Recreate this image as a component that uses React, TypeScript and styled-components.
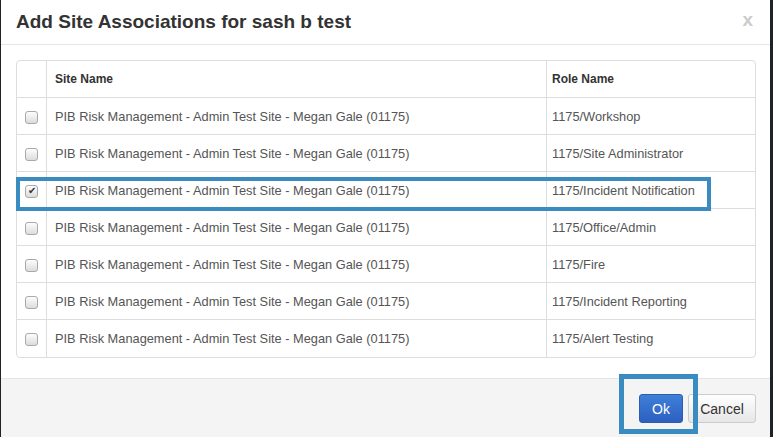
import React, { useState } from 'react'
import styled, { createGlobalStyle } from 'styled-components'

const GlobalStyle = createGlobalStyle`
    html, body {
        margin: 0;
        padding: 0;
        background: #1d2328;
        font-family: "Liberation Sans", Arial, sans-serif;
    }
`

const Page = styled.div`
    width: 773px;
    height: 437px;
    display: flex;
    padding-left: 1px;
    padding-right: 3px;
    box-sizing: border-box;
    overflow: hidden;
`

const Modal = styled.div`
    flex: 1;
    background: #ffffff;
    display: flex;
    flex-direction: column;
`

const Header = styled.div`
    height: 45px;
    box-sizing: border-box;
    border-bottom: 1px solid #e5e5e5;
    padding: 0 15px;
    display: flex;
    align-items: center;
    justify-content: space-between;
`

const Title = styled.h4`
    margin: 0;
    font-size: 19px;
    font-weight: bold;
    color: #333333;
`

const Close = styled.span`
    font-size: 19px;
    font-weight: bold;
    color: #cccccc;
    margin-right: 2px;
    margin-top: -4px;
`

const Body = styled.div`
    padding: 15px 14px 20px 15px;
`

const Table = styled.div`
    border: 1px solid #dddddd;
    border-radius: 4px;
    display: grid;
    grid-template-columns: 29px 500px 1fr;
`

type CellProps = {
    $last?: boolean,
    $first?: boolean,
    $head?: boolean,
    $role?: boolean,
}

const Cell = styled.div<CellProps>`
    height: 37px;
    box-sizing: border-box;
    display: flex;
    align-items: center;
    padding: 0 ${({ $role }) => $role ? '5px' : '8px'};
    font-size: ${({ $head }) => $head ? '12px' : '12.8px'};
    color: ${({ $head }) => $head ? '#333333' : '#555555'};
    font-weight: ${({ $head }) => $head ? 'bold' : 'normal'};
    border-left: ${({ $first }) => $first ? 'none' : '1px solid #dddddd'};
    border-bottom: ${({ $last }) => $last ? 'none' : '1px solid #dddddd'};
    white-space: nowrap;
`

const CheckCell = styled(Cell)`
    justify-content: center;
    padding: 0;
`

const Box = styled.span<{ $checked: boolean }>`
    width: 11px;
    height: 11px;
    border: 1px solid #a9a9a9;
    border-radius: 3px;
    background: linear-gradient(#fdfdfd, #dcdcdc);
    display: flex;
    align-items: center;
    justify-content: center;
    margin-top: 2px;
    cursor: pointer;
    color: #333333;
    font-size: 10px;
    line-height: 1;
`

const RowWrap = styled.div`
    display: contents;
`

const Highlight = styled.div`
    position: absolute;
    left: 16px;
    top: 177px;
    width: 695px;
    height: 34px;
    box-sizing: border-box;
    border: 4px solid #3a8bc0;
    pointer-events: none;
`

const OkHighlight = styled.div`
    position: absolute;
    left: 619px;
    top: 374px;
    width: 79px;
    height: 60px;
    box-sizing: border-box;
    border: 5px solid #3a8bc0;
    pointer-events: none;
`

const Footer = styled.div`
    flex: 1;
    background: #f4f4f4;
    border-top: 1px solid #e5e5e5;
    display: flex;
    justify-content: flex-end;
    align-items: flex-start;
    padding: 15px 14px 0 0;
    gap: 5px;
`

type BtnProps = {
    $primary?: boolean,
}

const Button = styled.button<BtnProps>`
    height: 29px;
    padding: 0;
    font-family: "Liberation Sans", Arial, sans-serif;
    font-size: 14px;
    border-radius: 3px;
    cursor: pointer;
    color: ${({ $primary }) => $primary ? '#ffffff' : '#333333'};
    border: 1px solid ${({ $primary }) => $primary ? '#2a5db0' : '#cccccc'};
    background: ${({ $primary }) => $primary
        ? 'linear-gradient(#3e80d8, #2d5fc0)'
        : 'linear-gradient(#ffffff, #e6e6e6)'};
    width: ${({ $primary }) => $primary ? '44px' : '68px'};
`

const SITE = 'PIB Risk Management - Admin Test Site - Megan Gale (01175)'

const roles = [
    '1175/Workshop',
    '1175/Site Administrator',
    '1175/Incident Notification',
    '1175/Office/Admin',
    '1175/Fire',
    '1175/Incident Reporting',
    '1175/Alert Testing',
]

const App: React.FunctionComponent = () => {
    const [checked, setChecked] = useState<number[]>([2])

    const toggle = (i: number) => setChecked((prev) => prev.includes(i) ? prev.filter((x) => x !== i) : [...prev, i])

    return (
        <>
            <GlobalStyle />
            <Page>
                <Modal>
                    <Header>
                        <Title>Add Site Associations for sash b test</Title>
                        <Close>x</Close>
                    </Header>
                    <Body>
                        <Table>
                            <CheckCell $first $head />
                            <Cell $head>Site Name</Cell>
                            <Cell $head $role>Role Name</Cell>
                            {roles.map((role, i) => {
                                const last = i === roles.length - 1
                                const on = checked.includes(i)
                                return (
                                    <RowWrap key={role}>
                                        <CheckCell $first $last={last}>
                                            <Box $checked={on} onClick={() => toggle(i)}>{on ? '✔' : ''}</Box>
                                        </CheckCell>
                                        <Cell $last={last}>{SITE}</Cell>
                                        <Cell $last={last} $role>{role}</Cell>
                                    </RowWrap>
                                )
                            })}
                        </Table>
                    </Body>
                    <Footer>
                        <Button $primary>Ok</Button>
                        <Button>Cancel</Button>
                    </Footer>
                </Modal>
                <Highlight />
                <OkHighlight />
            </Page>
        </>
    )
}

export default App
